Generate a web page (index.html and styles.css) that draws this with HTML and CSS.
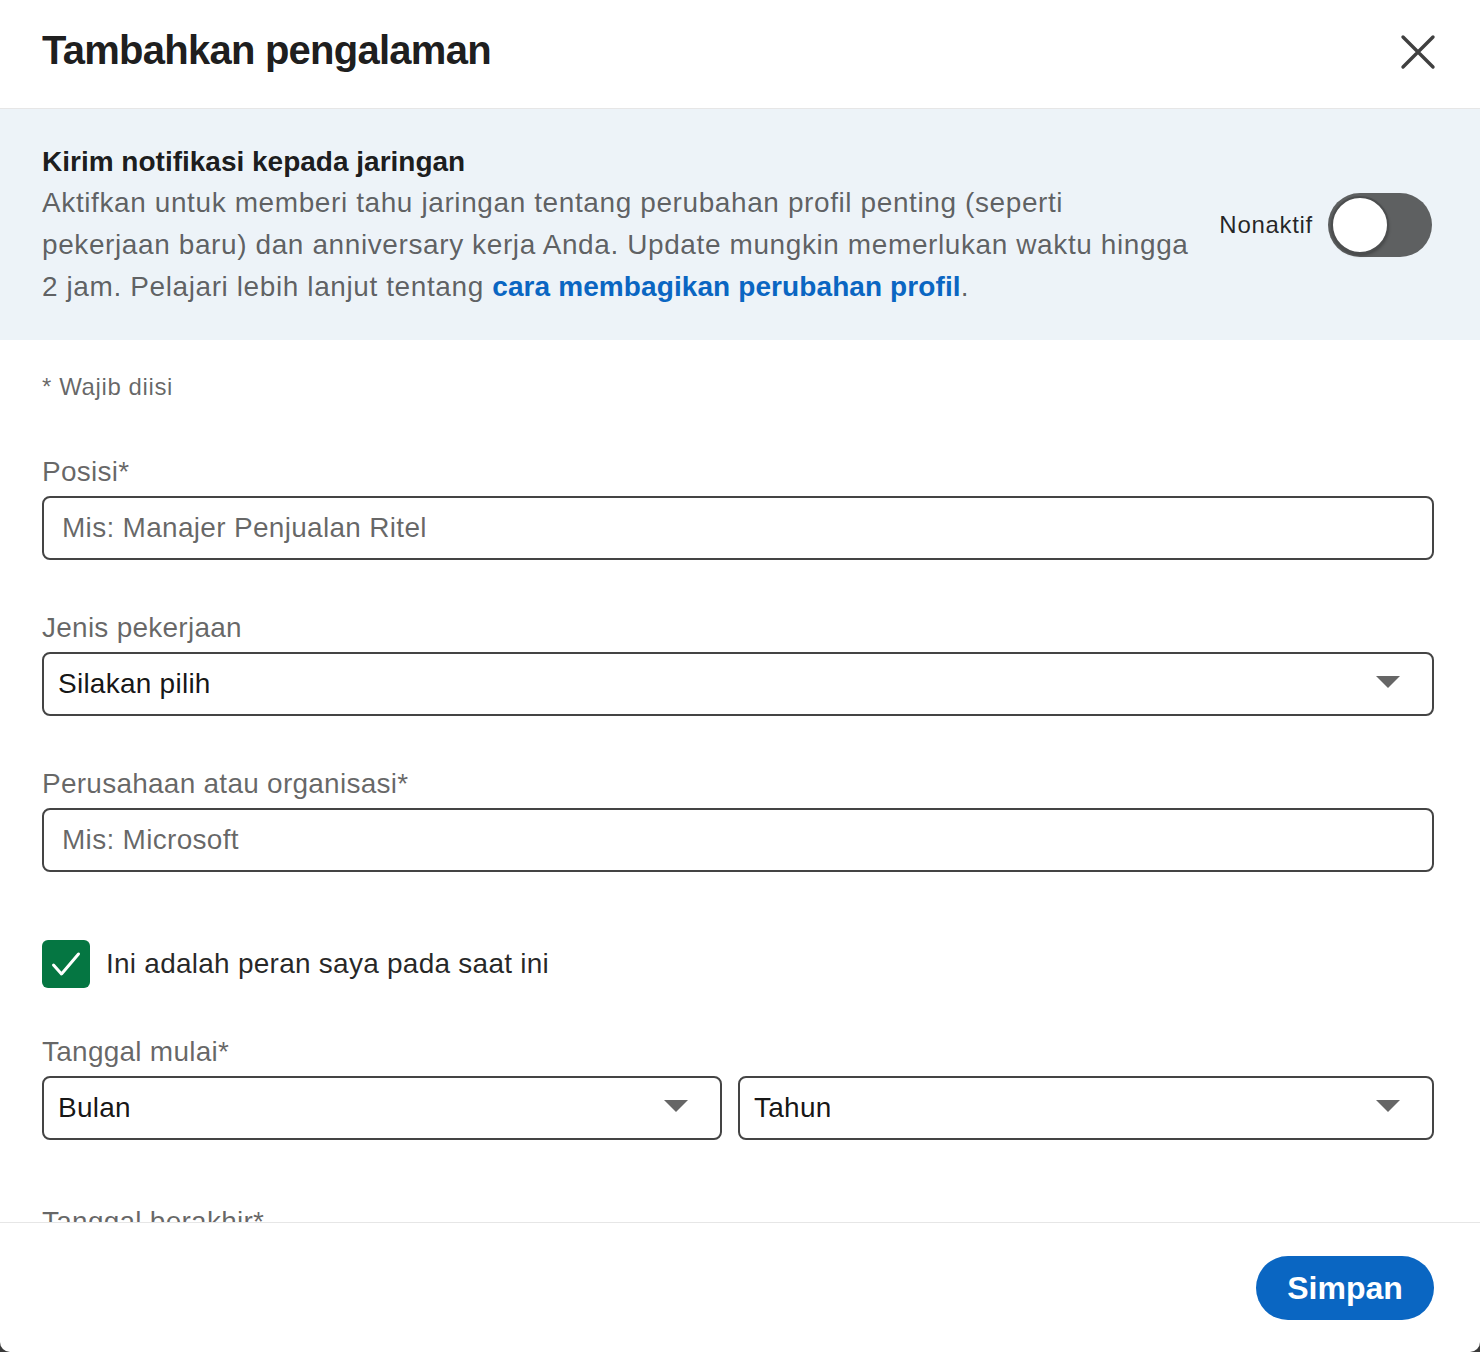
FILE: index.html
```html
<!DOCTYPE html>
<html lang="id">
<head>
<meta charset="utf-8">
<title>Tambahkan pengalaman</title>
<link rel="stylesheet" href="styles.css">
</head>
<body>
<div class="modal">
  <header class="modal-header">
    <h1 class="modal-title">Tambahkan pengalaman</h1>
    <button class="close-btn" aria-label="Tutup">
      <svg width="36" height="36" viewBox="0 0 36 36"><path d="M3 3 L33 33 M33 3 L3 33" stroke="#404040" stroke-width="3.4" stroke-linecap="round" fill="none"/></svg>
    </button>
  </header>
  <div class="modal-body">
    <section class="notify">
      <div class="notify-text">
        <h2 class="notify-title">Kirim notifikasi kepada jaringan</h2>
        <p class="notify-desc">Aktifkan untuk memberi tahu jaringan tentang perubahan profil penting (seperti pekerjaan baru) dan anniversary kerja Anda. Update mungkin memerlukan waktu hingga 2 jam. Pelajari lebih lanjut tentang <a class="link" href="#">cara membagikan perubahan profil</a>.</p>
      </div>
      <div class="toggle-group">
        <span class="toggle-label">Nonaktif</span>
        <span class="toggle"><span class="knob"></span></span>
      </div>
    </section>
    <div class="form">
      <p class="required-note">* Wajib diisi</p>
      <div class="field">
        <label class="label">Posisi*</label>
        <div class="box input"><span class="placeholder">Mis: Manajer Penjualan Ritel</span></div>
      </div>
      <div class="field">
        <label class="label">Jenis pekerjaan</label>
        <div class="box select"><span class="value">Silakan pilih</span><span class="caret"></span></div>
      </div>
      <div class="field">
        <label class="label">Perusahaan atau organisasi*</label>
        <div class="box input"><span class="placeholder">Mis: Microsoft</span></div>
      </div>
      <div class="check-row">
        <span class="checkbox">
          <svg width="48" height="48" viewBox="0 0 48 48"><path d="M11.5 25 L19.5 34 L36.5 14" stroke="#fff" stroke-width="3" fill="none" stroke-linecap="round" stroke-linejoin="round"/></svg>
        </span>
        <span class="check-label">Ini adalah peran saya pada saat ini</span>
      </div>
      <div class="field field-date">
        <label class="label">Tanggal mulai*</label>
        <div class="date-row">
          <div class="box select month"><span class="value">Bulan</span><span class="caret"></span></div>
          <div class="box select year"><span class="value">Tahun</span><span class="caret"></span></div>
        </div>
      </div>
      <div class="field field-end">
        <label class="label">Tanggal berakhir*</label>
      </div>
    </div>
  </div>
  <footer class="modal-footer">
    <button class="save-btn">Simpan</button>
  </footer>
</div>
</body>
</html>
```
FILE: styles.css
```css
* { box-sizing: border-box; }
html, body { margin: 0; padding: 0; }
body {
  background: #3a3a3a;
  font-family: "Liberation Sans", Arial, sans-serif;
  width: 1480px;
  height: 1352px;
  overflow: hidden;
}
.modal {
  width: 1480px;
  height: 1352px;
  background: #fff;
  border-radius: 0 0 10px 10px;
  display: flex;
  flex-direction: column;
  overflow: hidden;
}
.modal-header {
  height: 109px;
  flex: none;
  border-bottom: 1px solid #e6e6e6;
  display: flex;
  justify-content: space-between;
  align-items: flex-start;
  padding: 26px 35px 0 42px;
}
.modal-title {
  margin: 0;
  font-size: 40px;
  line-height: 48px;
  font-weight: 700;
  letter-spacing: -0.75px;
  color: rgba(0,0,0,0.9);
}
.close-btn {
  border: 0;
  background: none;
  padding: 0;
  width: 54px;
  height: 54px;
  display: flex;
  align-items: center;
  justify-content: center;
  margin-top: -1px;
}
.modal-body {
  flex: 1;
  overflow: hidden;
  display: flex;
  flex-direction: column;
}
.notify {
  flex: none;
  background: #edf3f8;
  padding: 33px 48px 32px 42px;
  display: flex;
  align-items: center;
  justify-content: space-between;
}
.notify-text { width: 1153px; }
.notify-title {
  margin: 0;
  font-size: 28px;
  line-height: 40px;
  font-weight: 700;
  color: rgba(0,0,0,0.9);
}
.notify-desc {
  margin: 0;
  font-size: 28px;
  line-height: 42px;
  letter-spacing: 0.6px;
  color: rgba(0,0,0,0.62);
}
.link {
  color: #0a66c2;
  font-weight: 700;
  letter-spacing: 0.1px;
  text-decoration: none;
}
.toggle-group {
  display: flex;
  align-items: center;
  gap: 15px;
}
.toggle-label {
  font-size: 24px;
  letter-spacing: 0.7px;
  color: rgba(0,0,0,0.85);
}
.toggle {
  position: relative;
  width: 104px;
  height: 64px;
  border-radius: 32px;
  background: #5e6061;
  display: block;
}
.knob {
  position: absolute;
  left: 3px;
  top: 3px;
  width: 58px;
  height: 58px;
  border-radius: 50%;
  background: #fff;
  border: 2px solid #4c4e4f;
  box-shadow: 0 2px 3px rgba(0,0,0,0.25);
}
.form {
  padding: 31px 46px 0 42px;
  display: flex;
  flex-direction: column;
}
.required-note {
  margin: 0;
  font-size: 24px;
  line-height: 32px;
  letter-spacing: 0.6px;
  color: rgba(0,0,0,0.6);
}
.field { display: flex; flex-direction: column; margin-top: 48px; }
.form .field:first-of-type { margin-top: 49px; }
.label {
  font-size: 28px;
  line-height: 40px;
  letter-spacing: 0.25px;
  color: rgba(0,0,0,0.6);
  margin-bottom: 4px;
}
.box {
  height: 64px;
  border: 2px solid #444;
  border-radius: 8px;
  display: flex;
  align-items: center;
  font-size: 28px;
  letter-spacing: 0.25px;
}
.input { padding-left: 18px; }
.placeholder { color: rgba(0,0,0,0.6); letter-spacing: 0.3px; }
.select {
  padding-left: 14px;
  padding-right: 32px;
  justify-content: space-between;
}
.value { color: rgba(0,0,0,0.92); }
.caret {
  width: 0;
  height: 0;
  border-left: 12px solid transparent;
  border-right: 12px solid transparent;
  border-top: 12px solid #666;
  margin-top: -4px;
}
.check-row {
  margin-top: 68px;
  display: flex;
  align-items: center;
  gap: 16px;
}
.checkbox {
  width: 48px;
  height: 48px;
  border-radius: 6px;
  background: #057642;
  display: block;
}
.checkbox svg { display: block; }
.check-label {
  font-size: 28px;
  letter-spacing: 0.25px;
  color: rgba(0,0,0,0.85);
}
.field-date { margin-top: 44px; }
.date-row {
  display: flex;
  gap: 16px;
}
.month { width: 680px; padding-right: 32px; }
.year { flex: 1; }
.field-end { margin-top: 62px; }
.modal-footer {
  flex: none;
  height: 130px;
  border-top: 1px solid #e6e6e6;
  display: flex;
  justify-content: flex-end;
  align-items: flex-start;
  padding: 33px 46px 0 0;
}
.save-btn {
  width: 178px;
  height: 64px;
  border: 0;
  border-radius: 32px;
  background: #0a66c2;
  color: #fff;
  font-family: "Liberation Sans", Arial, sans-serif;
  font-size: 32px;
  font-weight: 700;
}
```
